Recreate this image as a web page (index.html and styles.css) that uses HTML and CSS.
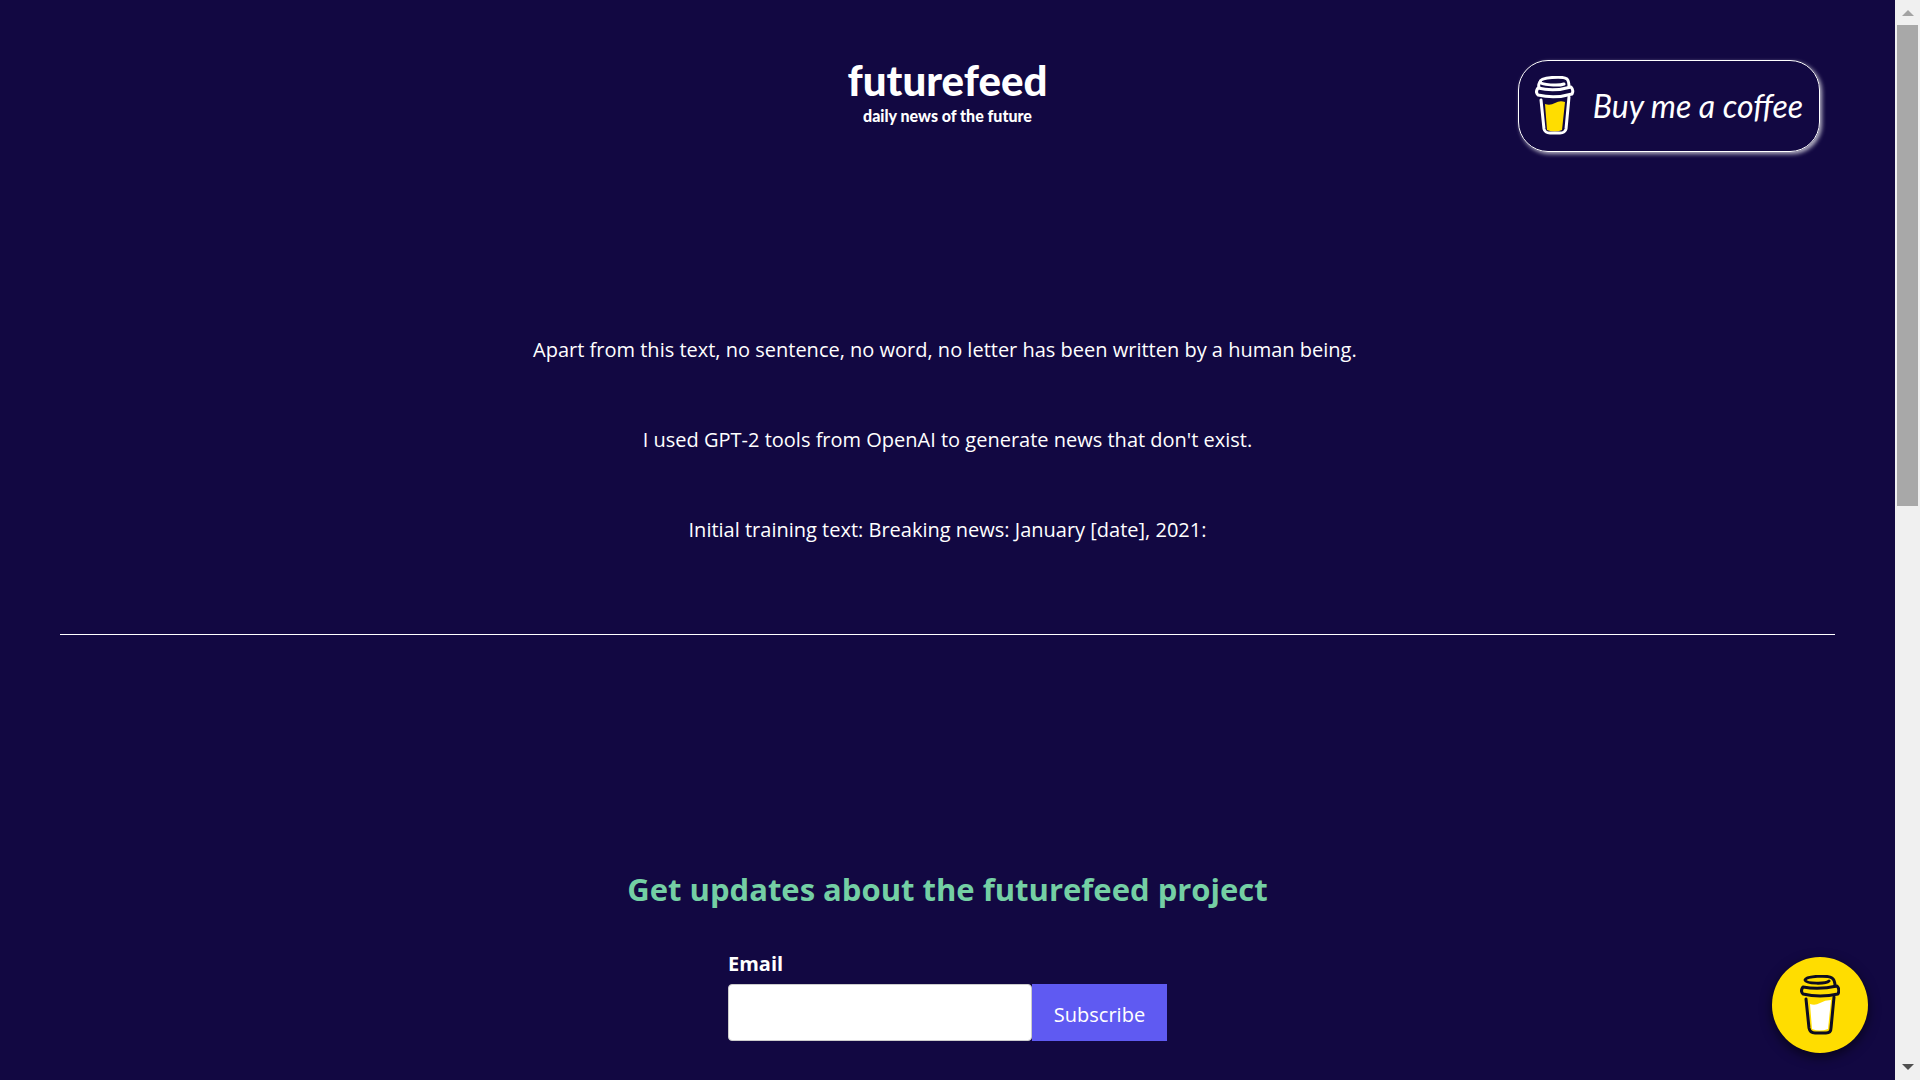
FILE: index.html
```html
<!DOCTYPE html>
<html lang="en">

<head>
	<meta charset="utf-8">
	<title>futurefeed - daily news of the future</title>
	<meta name="viewport" content="width=device-width, initial-scale=1">
	<link rel="stylesheet" href="styles.css">
</head>

<body>
	<div class="page">
		<header class="header">
			<a class="logo" href="#">
				<span class="logo-name">futurefeed</span>
				<span class="logo-tagline">daily news of the future</span>
			</a>
			<a class="coffee-button" href="#coffee">
				<svg class="coffee-cup" viewBox="0 0 40 60" aria-hidden="true">
					<path d="M10 28 Q15 30 20 27 T30 26 L27 54 Q20 57 12 54 Z" fill="#ffdd00" />
					<g fill="none" stroke="#fff" stroke-width="3" stroke-linecap="round" stroke-linejoin="round">
						<path d="M29 8 C24 10 6 9 5 6 C5 1 28 0 32 3 Q34 5 34 11" />
						<path d="M5 6 Q3 9 4 11" />
						<path d="M3 12 Q19 16 36 11 Q39 14 37 18 Q20 23 3 19 Q0 16 3 12 Z" />
						<path d="M6 24 L9 53 Q10 57 15 57 H25 Q30 57 31 53 L34 21" />
					</g>
				</svg>
				<span>Buy me a coffee</span>
			</a>
		</header>

		<main>
			<section class="intro">
				<p>Apart from this text, no sentence, no word, no letter has been written by a human being.&nbsp;</p>
				<p>I used GPT-2 tools from OpenAI to generate news that don't exist.</p>
				<p>Initial training text: Breaking news: January [date], 2021:</p>
			</section>
			<hr class="rule">
			<section class="updates">
				<h1>Get updates about the futurefeed project</h1>
				<form class="subscribe">
					<label for="email">Email</label>
					<div class="subscribe-row">
						<input type="email" id="email" name="email">
						<button type="submit">Subscribe</button>
					</div>
				</form>
			</section>
		</main>
	</div>

	<div class="scrollbar" aria-hidden="true">
		<span class="arrow arrow-up"></span>
		<div class="track"><div class="thumb"></div></div>
		<span class="arrow arrow-down"></span>
	</div>

	<button class="coffee-widget" type="button" aria-label="Buy me a coffee">
		<svg viewBox="0 0 40 60" aria-hidden="true">
			<path d="M10 29 Q15 31 20 28 T31 25 L28 54 Q20 57 12 54 Z" fill="#fff" />
			<g fill="none" stroke="#0d0c22" stroke-width="3" stroke-linecap="round" stroke-linejoin="round">
				<path d="M29 6 C26 9 6 9 5 5 C6 1 28 0 32 3 Q35 5 35 11" />
				<path d="M3 12 Q19 15 37 11 Q40 14 38 19 Q20 23 3 19 Q0 16 3 12 Z" />
				<path d="M6 24 L9 53 Q10 58 15 58 H26 Q31 58 31 53 L34 22" />
			</g>
		</svg>
	</button>
</body>

</html>
```

FILE: styles.css
```css
* {
	box-sizing: border-box;
}

body {
	display: flex;
	height: 100vh;
	margin: 0;
	overflow: hidden;
	background-color: #120842;
	color: #fff;
	font-family: "Open Sans", "Noto Sans", sans-serif;
	font-size: 20px;
	line-height: 30px;
}

a {
	color: inherit;
	text-decoration: none;
}

.page {
	flex: 1;
	padding: 60px;
	overflow: hidden;
}

/* header */

.header {
	display: grid;
	grid-template-columns: 1fr auto 1fr;
	align-items: start;
	padding-right: 15px;
	padding-left: 15px;
}

.logo {
	display: flex;
	flex-direction: column;
	grid-column: 2;
	align-items: center;
	font-family: Lato, sans-serif;
}

.logo-name {
	font-size: 42px;
	font-weight: 900;
	line-height: 40px;
}

.logo-tagline {
	font-size: 16px;
	font-weight: 900;
	line-height: 32px;
}

.coffee-button {
	display: flex;
	align-items: center;
	justify-self: end;
	gap: 18px;
	height: 92px;
	padding: 0 16px;
	border: 1px solid #fff;
	border-radius: 30px;
	box-shadow: 2px 2px 4px rgba(255, 255, 255, 0.7);
	font-family: Lato, sans-serif;
	font-size: 32px;
	font-style: italic;
	white-space: nowrap;
}

.coffee-cup {
	flex: none;
	width: 40px;
	height: 60px;
}

/* intro text */

.intro {
	padding: 183px 0 89px;
	text-align: center;
}

.intro p {
	margin: 0 0 60px;
}

.intro p:last-child {
	margin-bottom: 0;
}

.rule {
	height: 1px;
	margin: 0;
	border: 0;
	background-color: #fff;
}

/* newsletter */

.updates {
	display: flex;
	flex-direction: column;
	align-items: center;
	padding-top: 230px;
}

.updates h1 {
	margin: 0 0 36px;
	color: #74cfa4;
	font-size: 31px;
	font-weight: 700;
	line-height: 48px;
}

.subscribe label {
	display: block;
	margin-bottom: 5px;
	font-weight: 700;
}

.subscribe-row {
	display: flex;
	height: 57px;
}

.subscribe input {
	width: 304px;
	padding: 0 16px;
	border: 1px solid #ccc;
	border-radius: 4px;
	background-color: #fff;
	font: inherit;
}

.subscribe button {
	width: 135px;
	padding: 4px 0 0;
	border: 0;
	background-color: #5f5af2;
	color: #fff;
	font: inherit;
}

/* scrollbar */

.scrollbar {
	display: flex;
	flex: none;
	flex-direction: column;
	align-items: center;
	width: 25px;
	background-color: #f0f0f0;
}

.track {
	display: grid;
	flex: 1;
	grid-template-rows: 7fr 8fr;
	width: 21px;
}

.thumb {
	background-color: #a8a8a8;
}

.arrow {
	height: 16px;
	border: 6px solid transparent;
}

.arrow-up {
	margin-bottom: 9px;
	border-top-width: 10px;
	border-bottom: 6px solid #a3a3a3;
}

.arrow-down {
	margin-top: 9px;
	border-top: 6px solid #505050;
	border-bottom-width: 10px;
}

/* floating coffee widget */

.coffee-widget {
	display: flex;
	position: fixed;
	right: 52px;
	bottom: 27px;
	align-items: center;
	justify-content: center;
	width: 96px;
	height: 96px;
	padding: 0;
	border: 0;
	border-radius: 50%;
	background-color: #ffdd00;
	box-shadow: 0 4px 12px rgba(0, 0, 0, 0.6);
}

.coffee-widget svg {
	width: 40px;
	height: 60px;
}
```
